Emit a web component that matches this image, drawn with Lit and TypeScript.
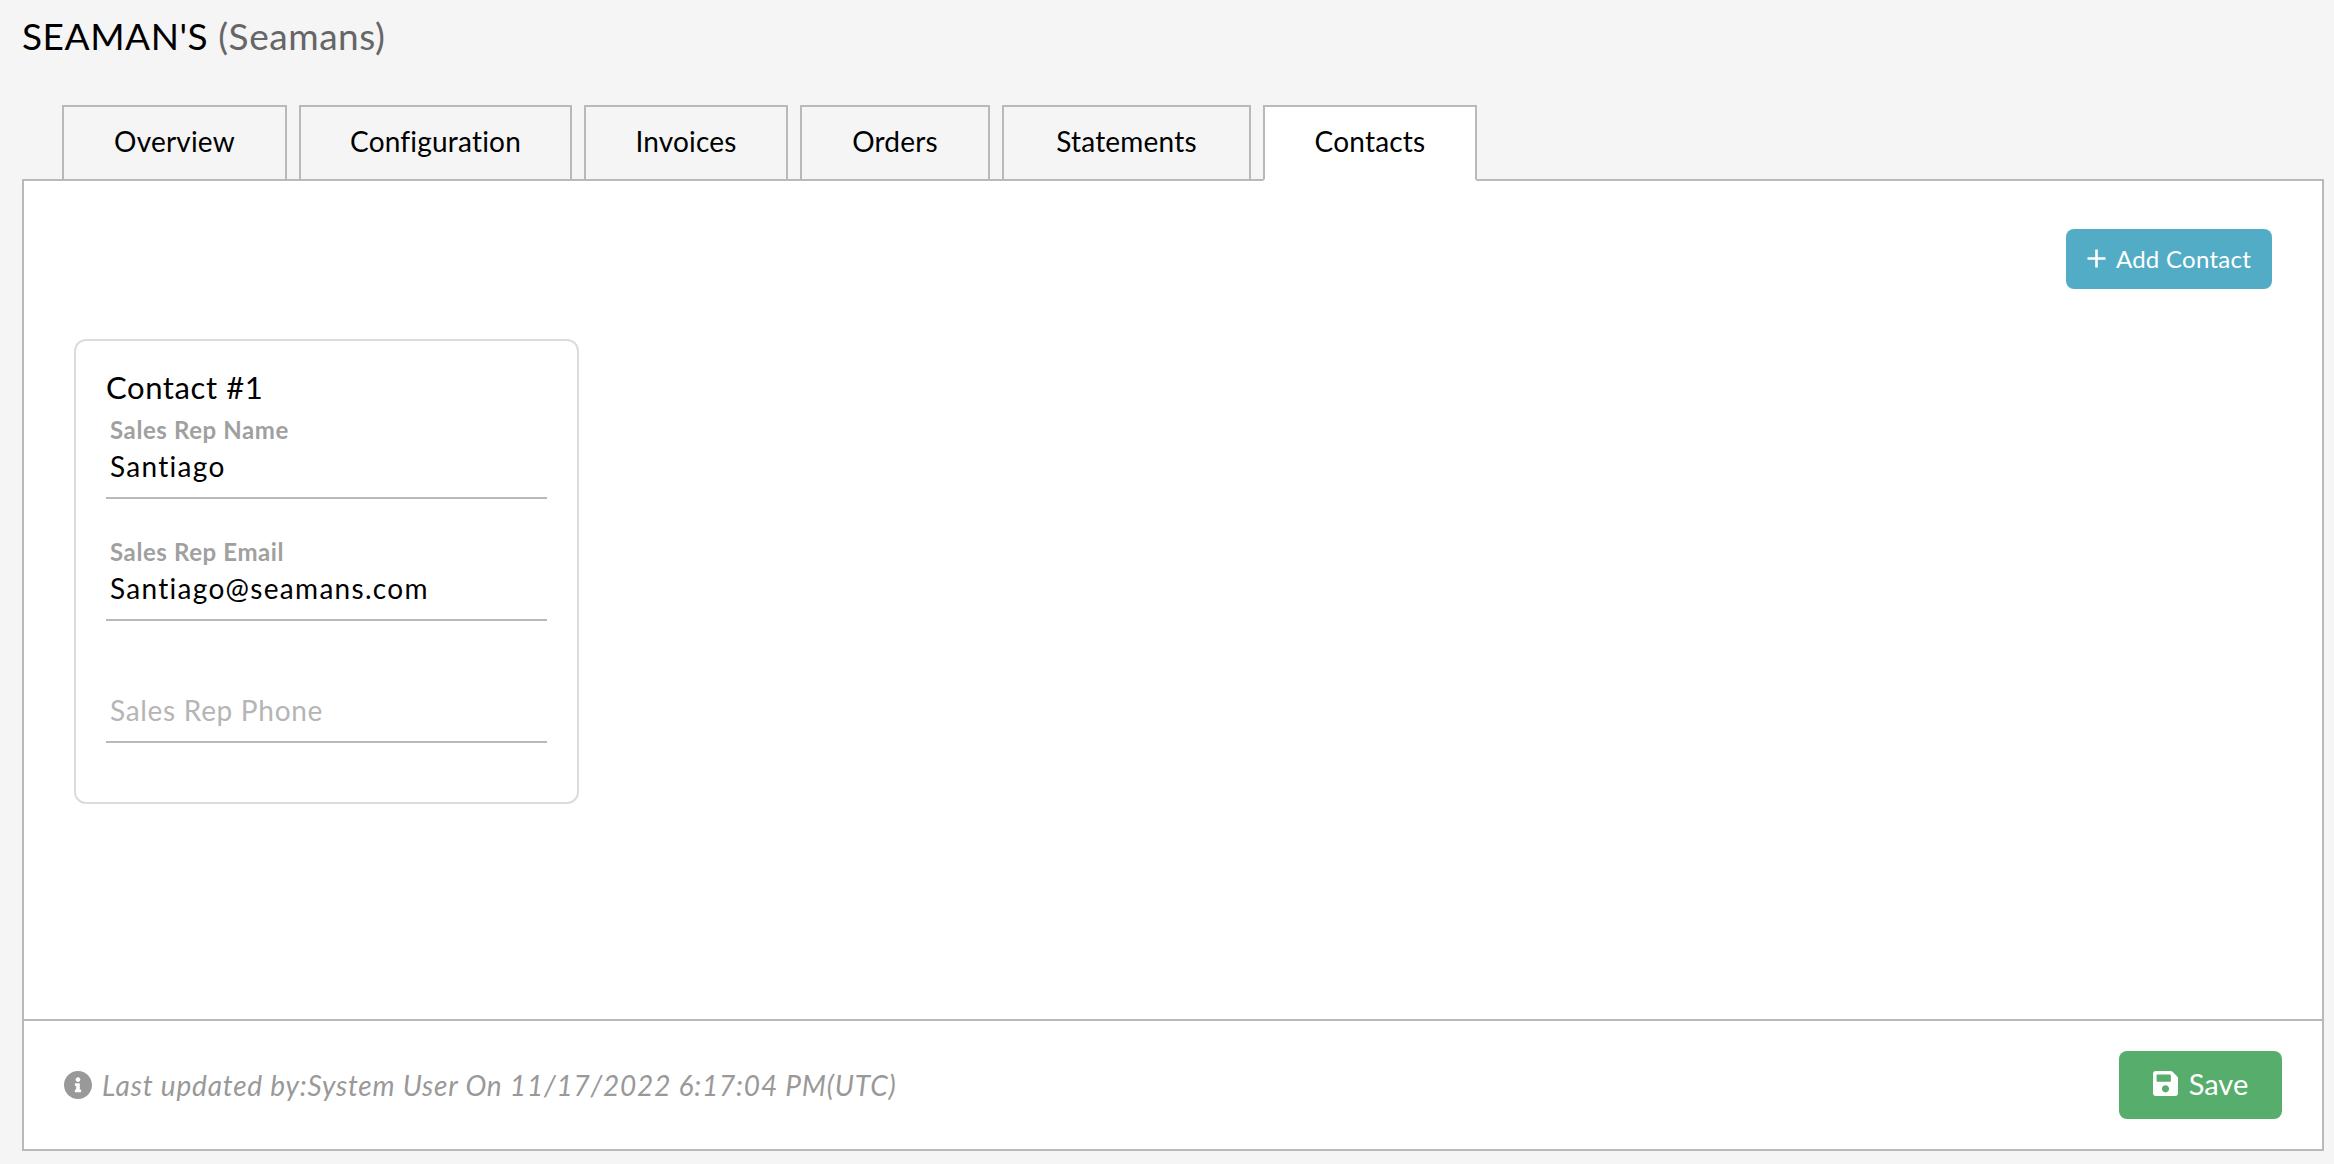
import { LitElement, html, css } from "lit";
import { customElement } from "lit/decorators.js";

const TABS = [
  { label: "Overview", width: 225 },
  { label: "Configuration", width: 273 },
  { label: "Invoices", width: 204 },
  { label: "Orders", width: 190 },
  { label: "Statements", width: 249 },
  { label: "Contacts", width: 214, active: true },
];

@customElement("app-root")
export class AppRoot extends LitElement {
  static styles = css`
    :host {
      display: block;
      width: 2334px;
      height: 1164px;
      background: #f5f5f5;
      font-family: "Lato", "Open Sans", sans-serif;
      color: #000;
      overflow: hidden;
    }
    .page {
      display: flex;
      flex-direction: column;
      height: 1151px;
      padding: 0 10px 0 22px;
      box-sizing: border-box;
    }
    .title {
      height: 105px;
      box-sizing: border-box;
      padding-top: 14px;
      font-size: 37px;
      line-height: 44px;
      letter-spacing: 0.55px;
      margin: 0;
      font-weight: 400;
    }
    .title span { color: #666; }
    .tabs {
      display: flex;
      gap: 12px;
      margin-left: 40px;
      margin-bottom: -2px;
      position: relative;
      z-index: 1;
    }
    .tab {
      height: 76px;
      box-sizing: border-box;
      border: 2px solid #b9b9b9;
      background: #f5f5f5;
      display: flex;
      align-items: center;
      justify-content: center;
      font-size: 28px;
      letter-spacing: 0.2px;
      padding-bottom: 4px;
    }
    .tab.active {
      background: #fff;
      border-bottom-color: #fff;
    }
    .panel {
      flex: 1;
      display: flex;
      flex-direction: column;
      background: #fff;
      border: 2px solid #b9b9b9;
      min-height: 0;
    }
    .body {
      flex: 1;
      padding: 48px 50px 0;
    }
    .actions {
      display: flex;
      justify-content: flex-end;
      margin-bottom: 50px;
    }
    .btn {
      display: flex;
      align-items: center;
      justify-content: center;
      border: none;
      color: #fff;
      font-family: inherit;
      box-sizing: border-box;
      border-radius: 8px;
    }
    .btn-add {
      width: 206px;
      height: 60px;
      background: #52acc6;
      font-size: 24px;
      letter-spacing: 0.27px;
      gap: 10px;
      padding: 0 0 2px;
    }
    .btn-add svg { width: 19px; height: 19px; }
    .btn-save {
      width: 163px;
      height: 68px;
      background: #57ad6b;
      font-size: 29px;
      gap: 11px;
      padding: 0 0 3px;
    }
    .btn-save svg { width: 25px; height: 25px; }
    .card {
      width: 505px;
      height: 465px;
      box-sizing: border-box;
      border: 2px solid #dcdcdc;
      border-radius: 12px;
      padding: 26px 30px 0;
    }
    .card h3 {
      margin: 0;
      font-size: 31px;
      line-height: 40px;
      letter-spacing: 0.6px;
      font-weight: 400;
    }
    .field {
      border-bottom: 2px solid #b9b9b9;
      padding-left: 4px;
      display: flex;
      flex-direction: column;
      justify-content: flex-end;
      height: 92px;
      box-sizing: border-box;
    }
    .field + .field { margin-top: 30px; }
    .label {
      font-size: 24px;
      line-height: 30px;
      letter-spacing: 0.6px;
      font-weight: 700;
      color: #a0a0a0;
      margin-bottom: 3px;
    }
    .value {
      font-size: 28px;
      line-height: 36px;
      padding-bottom: 13px;
      letter-spacing: 1.3px;
    }
    .value.empty {
      color: #b5b5b5;
      letter-spacing: 0.7px;
    }
    .footer {
      height: 130px;
      box-sizing: border-box;
      border-top: 2px solid #b9b9b9;
      display: flex;
      align-items: center;
      justify-content: space-between;
      padding: 0 40px;
    }
    .meta {
      display: flex;
      align-items: center;
      gap: 10px;
      color: #999;
      font-style: italic;
      font-size: 28px;
      letter-spacing: 0.8px;
    }
    .meta svg { width: 28px; height: 28px; fill: #999; }
  `;

  private field(label: string, value: string) {
    return html`<div class="field">
      ${value ? html`<div class="label">${label}</div>` : null}
      <div class="value ${value ? "" : "empty"}">${value || label}</div>
    </div>`;
  }

  render() {
    return html`
      <div class="page">
        <h1 class="title">SEAMAN'S <span>(Seamans)</span></h1>
        <div class="tabs">
          ${TABS.map(
            (t) => html`<div class="tab ${t.active ? "active" : ""}" style="width:${t.width}px">${t.label}</div>`
          )}
        </div>
        <div class="panel">
          <div class="body">
            <div class="actions">
              <button class="btn btn-add">
                <svg viewBox="0 0 19 19" fill="none" stroke="#fff" stroke-width="2.6">
                  <path d="M9.5 0.5v18M0.5 9.5h18" />
                </svg>
                Add Contact
              </button>
            </div>
            <div class="card">
              <h3>Contact #1</h3>
              ${this.field("Sales Rep Name", "Santiago")}
              ${this.field("Sales Rep Email", "Santiago@seamans.com")}
              ${this.field("Sales Rep Phone", "")}
            </div>
          </div>
          <div class="footer">
            <div class="meta">
              <svg viewBox="8 8 496 496">
                <path d="M256 8C119.043 8 8 119.083 8 256c0 136.997 111.043 248 248 248s248-111.003 248-248C504 119.083 392.957 8 256 8zm0 110c23.196 0 42 18.804 42 42s-18.804 42-42 42-42-18.804-42-42 18.804-42 42-42zm56 254c0 6.627-5.373 12-12 12h-88c-6.627 0-12-5.373-12-12v-24c0-6.627 5.373-12 12-12h12v-64h-12c-6.627 0-12-5.373-12-12v-24c0-6.627 5.373-12 12-12h64c6.627 0 12 5.373 12 12v100h12c6.627 0 12 5.373 12 12v24z" />
              </svg>
              <span>Last updated by:System User On 11/17/2022 6:17:04 PM(UTC)</span>
            </div>
            <button class="btn btn-save">
              <svg viewBox="0 32 448 448" fill="#fff">
                <path d="M433.941 129.941l-83.882-83.882A48 48 0 0 0 316.118 32H48C21.49 32 0 53.49 0 80v352c0 26.51 21.49 48 48 48h352c26.51 0 48-21.49 48-48V163.882a48 48 0 0 0-14.059-33.941zM224 416c-35.346 0-64-28.654-64-64 0-35.346 28.654-64 64-64s64 28.654 64 64c0 35.346-28.654 64-64 64zm96-304.52V212c0 6.627-5.373 12-12 12H76c-6.627 0-12-5.373-12-12V108c0-6.627 5.373-12 12-12h228.52c3.183 0 6.235 1.264 8.485 3.515l3.48 3.48A11.996 11.996 0 0 1 320 111.48z" />
              </svg>
              Save
            </button>
          </div>
        </div>
      </div>
    `;
  }
}
